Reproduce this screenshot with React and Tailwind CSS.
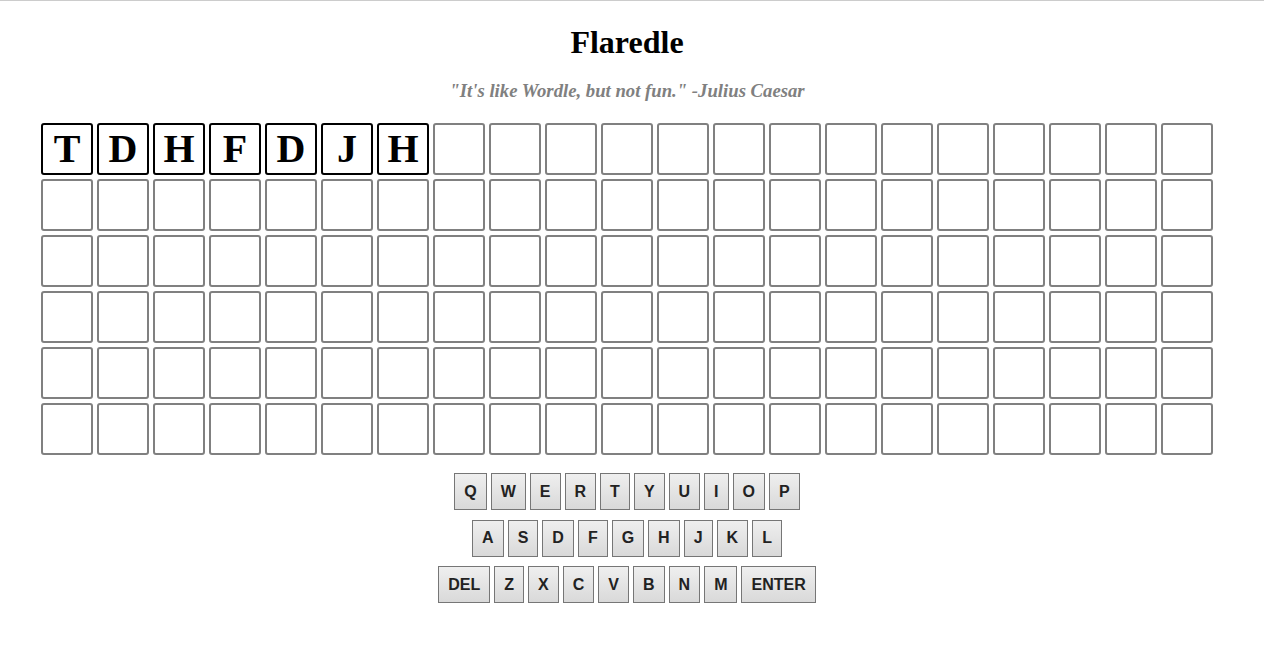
import React from "react";

const guess = ["T", "D", "H", "F", "D", "J", "H"];
const COLS = 21;
const ROWS = 6;

const rows = [
  ["Q", "W", "E", "R", "T", "Y", "U", "I", "O", "P"],
  ["A", "S", "D", "F", "G", "H", "J", "K", "L"],
  ["DEL", "Z", "X", "C", "V", "B", "N", "M", "ENTER"],
];

function Tile({ letter }) {
  return (
    <div
      className={
        "w-[52px] h-[52px] rounded-[3px] border-2 flex items-center justify-center text-[40px] font-bold leading-none text-black " +
        (letter ? "border-black" : "border-[#808080]")
      }
      style={{ fontFamily: '"Liberation Serif", "Times New Roman", serif' }}
    >
      {letter}
    </div>
  );
}

function Key({ label }) {
  return (
    <div
      className="h-[37px] px-[9px] border border-[#767676] bg-gradient-to-b from-[#efefef] to-[#d9d9d9] flex items-center justify-center text-[16px] font-bold text-[#222]"
      style={{ fontFamily: '"Liberation Sans", Arial, sans-serif' }}
    >
      {label}
    </div>
  );
}

export default function App() {
  return (
    <div className="min-h-[645px] bg-white border-t border-[#cccccc]">
      <div className="w-[1254px] flex flex-col items-center">
        <h1
          className="mt-[23px] text-[32px] leading-[36px] font-bold text-black"
          style={{ fontFamily: '"Liberation Serif", "Times New Roman", serif' }}
        >
          Flaredle
        </h1>
        <p
          className="mt-[20px] text-[18.72px] leading-[22px] font-bold italic text-[#808080]"
          style={{ fontFamily: '"Liberation Serif", "Times New Roman", serif' }}
        >
          "It's like Wordle, but not fun." -Julius Caesar
        </p>
        <div className="mt-[21px] grid grid-cols-[repeat(21,52px)] gap-[4px]">
          {Array.from({ length: ROWS * COLS }).map((_, i) => (
            <Tile key={i} letter={i < guess.length ? guess[i] : ""} />
          ))}
        </div>
        <div className="mt-[18px] flex flex-col items-center gap-[9.5px]">
          {rows.map((r, ri) => (
            <div key={ri} className="flex gap-[4px]">
              {r.map((k) => (
                <Key key={k} label={k} />
              ))}
            </div>
          ))}
        </div>
      </div>
    </div>
  );
}
